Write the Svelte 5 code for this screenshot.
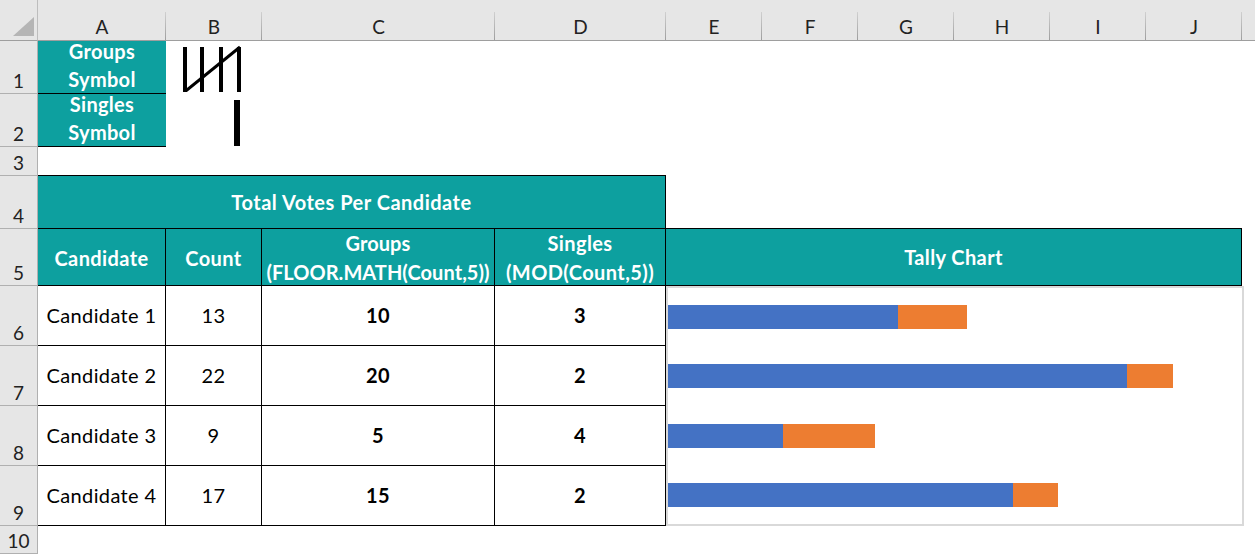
<script>
  const letters = ['A', 'B', 'C', 'D', 'E', 'F', 'G', 'H', 'I', 'J'];
  const unit = 22.97; // px per vote in the chart

  const candidates = [
    { name: 'Candidate 1', count: 13 },
    { name: 'Candidate 2', count: 22 },
    { name: 'Candidate 3', count: 9 },
    { name: 'Candidate 4', count: 17 }
  ].map(c => ({ ...c, singles: c.count % 5, groups: c.count - (c.count % 5) }));
</script>

<div class="sheet">
  <div class="corner"><span class="triangle"></span></div>
  {#each letters as letter}
    <div class="col-head">{letter}</div>
  {/each}
  <div class="col-rest"></div>

  {#each [1, 2, 3, 4, 5, 6, 7, 8, 9, 10] as n}
    <div class="row-head" style="grid-row: {n + 1}">{n}</div>
  {/each}

  <div class="label" style="grid-area: 2 / 2">Groups<br />Symbol</div>
  <div class="label" style="grid-area: 3 / 2">Singles<br />Symbol</div>

  <div class="tally" style="grid-area: 2 / 3">
    <svg width="60" height="50" viewBox="0 0 60 50">
      <g fill="#000">
        <rect x="1" y="5" width="4" height="46" />
        <rect x="18" y="5" width="4" height="46" />
        <rect x="37" y="5" width="4" height="46" />
        <rect x="55" y="5" width="4" height="46" />
      </g>
      <path d="M2.5 50 L58 5" stroke="#000" stroke-width="3" fill="none" />
    </svg>
  </div>
  <div class="single" style="grid-area: 3 / 3">
    <span></span>
  </div>

  <div class="head title" style="grid-area: 5 / 2 / 6 / 6">Total Votes Per Candidate</div>

  <div class="head col" style="grid-area: 6 / 2">Candidate</div>
  <div class="head col" style="grid-area: 6 / 3">Count</div>
  <div class="head low" style="grid-area: 6 / 4">Groups<br />(FLOOR.MATH(Count,5))</div>
  <div class="head low mod" style="grid-area: 6 / 5">Singles<br />(MOD(Count,5))</div>
  <div class="head chart-head" style="grid-area: 6 / 6 / 7 / 12">Tally Chart</div>

  {#each candidates as c, i}
    <div class="cell" style="grid-area: {i + 7} / 2">{c.name}</div>
    <div class="cell" style="grid-area: {i + 7} / 3">{c.count}</div>
    <div class="cell strong" style="grid-area: {i + 7} / 4">{c.groups}</div>
    <div class="cell strong" style="grid-area: {i + 7} / 5">{c.singles}</div>
  {/each}

  <div class="chart" style="grid-area: 7 / 6 / 11 / 12">
    {#each candidates as c}
      <div class="bar-row">
        <span class="bar blue" style="width: {c.groups * unit}px"></span>
        <span class="bar orange" style="width: {c.singles * unit}px"></span>
      </div>
    {/each}
  </div>
</div>

<style>
  :global(body) {
    margin: 0;
    background: #fff;
  }

  .sheet {
    display: grid;
    grid-template-columns: 38px 128px 96px 233px 171px repeat(6, 96px) 1fr;
    grid-template-rows: 41px 53px 53px 29px 53px 57px 60px 60px 60px 60px 28px;
    width: 1255px;
    height: 554px;
    overflow: hidden;
    font-family: Lato, "Liberation Sans", sans-serif;
    font-size: 20px;
    color: #000;
    box-sizing: border-box;
  }

  .corner,
  .col-head,
  .col-rest {
    background: #e6e6e6;
    border-bottom: 1px solid #9e9e9e;
    grid-row: 1;
    box-sizing: border-box;
  }

  .corner {
    position: relative;
    border-right: 1px solid #bdbdbd;
  }

  .triangle {
    position: absolute;
    left: 13px;
    top: 17px;
    width: 21px;
    height: 19px;
    background: #b5b5b5;
    clip-path: polygon(100% 0, 100% 100%, 0 100%);
  }

  .col-head {
    display: flex;
    align-items: flex-end;
    justify-content: center;
    padding-bottom: 1px;
    font-size: 19px;
    line-height: 24px;
    color: #222;
    position: relative;
  }

  .col-head::after {
    content: '';
    position: absolute;
    right: 0;
    top: 12px;
    bottom: 0;
    width: 1px;
    background: linear-gradient(#d0d0d0, #9e9e9e);
  }

  .row-head {
    grid-column: 1;
    display: flex;
    align-items: flex-end;
    justify-content: center;
    background: #e6e6e6;
    border-right: 1px solid #b0b0b0;
    border-bottom: 1px solid #b0b0b0;
    box-sizing: border-box;
    font-size: 19px;
    line-height: 24px;
    color: #222;
  }

  .label {
    display: flex;
    align-items: center;
    justify-content: center;
    text-align: center;
    background: #0da09f;
    border-bottom: 1px solid #000;
    box-sizing: border-box;
    padding-bottom: 4px;
    color: #fff;
    font-weight: 700;
    letter-spacing: 0.3px;
    line-height: 28.5px;
    white-space: nowrap;
  }

  .tally {
    display: flex;
    padding-left: 16px;
    align-items: flex-start;
  }

  .tally svg {
    display: block;
    margin-top: 1px;
  }

  .single {
    display: flex;
    justify-content: flex-end;
    padding-right: 22px;
    padding-top: 6px;
    box-sizing: border-box;
  }

  .single span {
    width: 6px;
    height: 46px;
    background: #000;
  }

  .head {
    display: flex;
    align-items: center;
    justify-content: center;
    text-align: center;
    background: #0da09f;
    color: #fff;
    font-weight: 700;
    letter-spacing: 0.4px;
    border-right: 1px solid #000;
    border-bottom: 1px solid #000;
    box-sizing: border-box;
    white-space: nowrap;
  }

  .title {
    border-top: 1px solid #000;
    margin-top: -1px;
    padding-bottom: 1px;
    letter-spacing: 0.5px;
  }

  .col {
    padding-top: 1px;
  }

  .chart-head {
    border-top: 1px solid #000;
    margin-top: -1px;
    padding-bottom: 1px;
  }

  .low {
    padding-top: 1px;
    line-height: 29px;
    letter-spacing: 0.05px;
  }

  .mod {
    letter-spacing: 0.4px;
  }

  .cell {
    display: flex;
    align-items: center;
    justify-content: center;
    padding-bottom: 2px;
    letter-spacing: 0.36px;
    border-right: 1px solid #000;
    border-bottom: 1px solid #000;
    box-sizing: border-box;
  }

  .strong {
    font-weight: 700;
  }

  .chart {
    display: flex;
    flex-direction: column;
    justify-content: space-between;
    padding: 17px 0;
    border: 2px solid #d9d9d9;
    margin-right: -2px;
    background: #fff;
    box-sizing: border-box;
  }

  .bar-row {
    display: flex;
  }

  .bar {
    display: block;
    height: 24px;
  }

  .blue {
    background: #4472c4;
  }

  .orange {
    background: #ed7d31;
  }
</style>
